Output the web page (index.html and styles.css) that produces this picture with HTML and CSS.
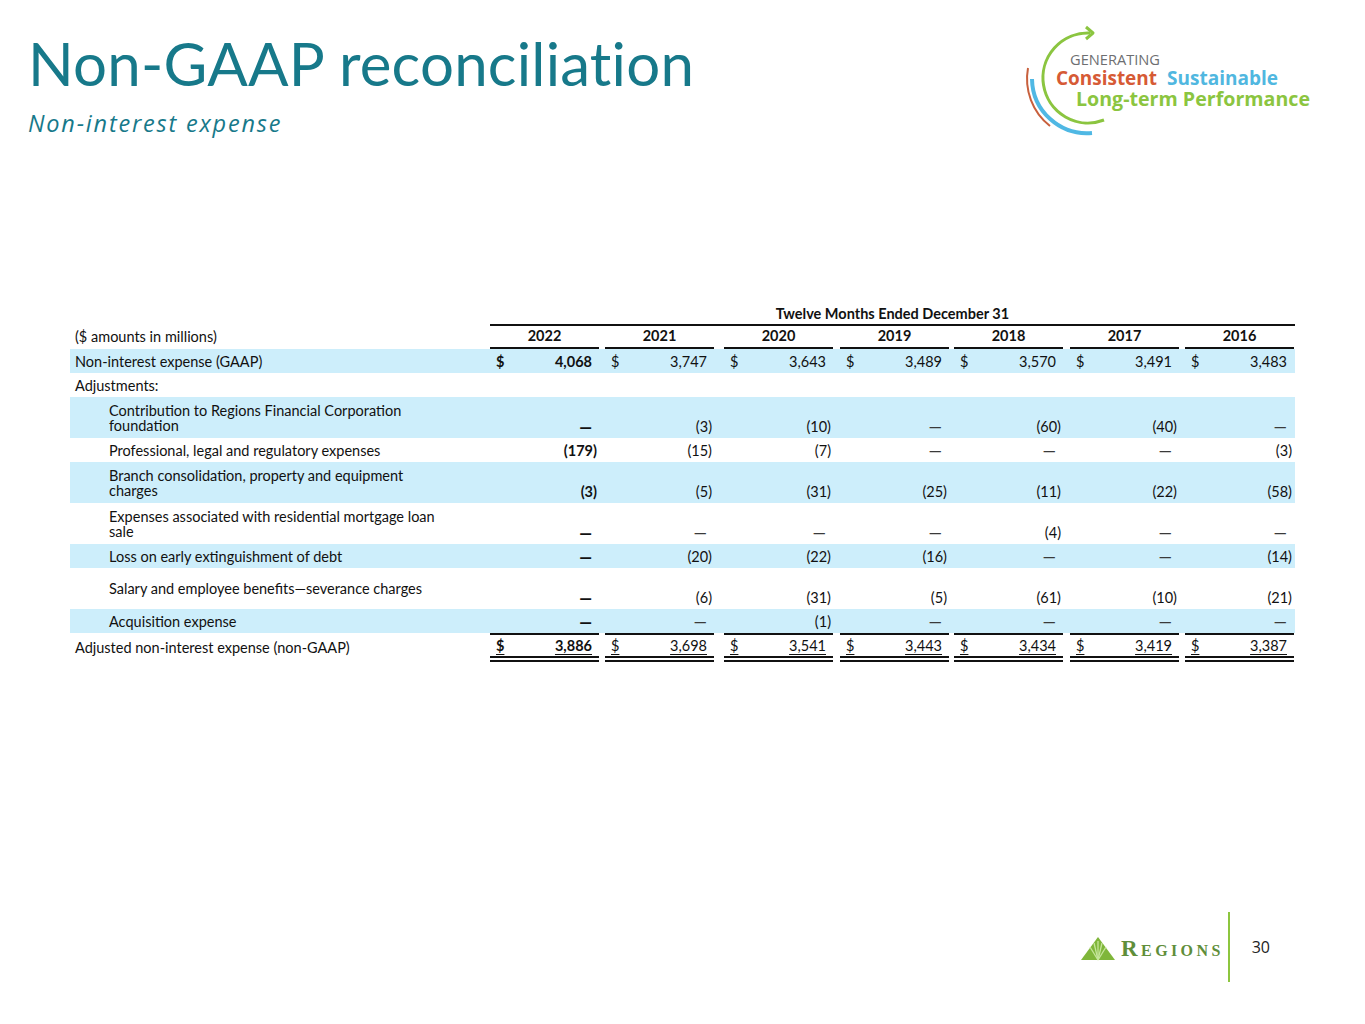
FILE: index.html
```html
<!DOCTYPE html>
<html lang="en">
<head>
<meta charset="utf-8">
<title>Non-GAAP reconciliation</title>
<link rel="stylesheet" href="styles.css">
</head>
<body>
<div class="page">
  <header class="top">
    <div class="titles">
      <h1 class="title">Non-GAAP reconciliation</h1>
      <h2 class="subtitle">Non-interest expense</h2>
    </div>
    <svg class="gen-logo" width="300" height="115" viewBox="0 0 300 115" aria-label="Generating Consistent Sustainable Long-term Performance">
      <path d="M 10 46 A 60 60 0 0 0 32 104" fill="none" stroke="#c8603d" stroke-width="2"/>
      <path d="M 14 57 A 55 55 0 0 0 74 111" fill="none" stroke="#4fb8e4" stroke-width="4"/>
      <path d="M 72 11 A 45 45 0 1 0 86 98" fill="none" stroke="#8bc540" stroke-width="3"/>
      <path d="M 68 5 L 75 11 L 68 17" fill="none" stroke="#8bc540" stroke-width="3" stroke-linejoin="round"/>
      <text class="g-gen" x="52" y="43" textLength="90" lengthAdjust="spacingAndGlyphs">GENERATING</text>
      <text class="g-con" x="38" y="63" textLength="101" lengthAdjust="spacingAndGlyphs">Consistent</text>
      <text class="g-sus" x="149" y="63" textLength="111" lengthAdjust="spacingAndGlyphs">Sustainable</text>
      <text class="g-long" x="58" y="84" textLength="234" lengthAdjust="spacingAndGlyphs">Long-term Performance</text>
    </svg>
  </header>

  <section class="tbl">
    <div class="row hdr1">
      <div class="lbl"></div>
      <div class="span">Twelve Months Ended December 31</div>
    </div>
    <div class="row hdr2">
      <div class="lbl l0">($ amounts in millions)</div>
      <div class="yc">2022</div>
      <div class="yc">2021</div>
      <div class="yc">2020</div>
      <div class="yc">2019</div>
      <div class="yc">2018</div>
      <div class="yc">2017</div>
      <div class="yc">2016</div>
    </div>

    <div class="row sh">
      <div class="lbl l0">Non-interest expense (GAAP)</div>
      <div class="v b"><span>$</span><span class="n">4,068</span></div>
      <div class="v"><span>$</span><span class="n">3,747</span></div>
      <div class="v"><span>$</span><span class="n">3,643</span></div>
      <div class="v"><span>$</span><span class="n">3,489</span></div>
      <div class="v"><span>$</span><span class="n">3,570</span></div>
      <div class="v"><span>$</span><span class="n">3,491</span></div>
      <div class="v"><span>$</span><span class="n">3,483</span></div>
    </div>

    <div class="row">
      <div class="lbl l0">Adjustments:</div>
    </div>

    <div class="row sh tall">
      <div class="lbl ind">Contribution to Regions Financial Corporation<br>foundation</div>
      <div class="v b"><span class="n dash">—</span></div>
      <div class="v"><span class="n neg">(3)</span></div>
      <div class="v"><span class="n neg">(10)</span></div>
      <div class="v"><span class="n dash">—</span></div>
      <div class="v"><span class="n neg">(60)</span></div>
      <div class="v"><span class="n neg">(40)</span></div>
      <div class="v"><span class="n dash">—</span></div>
    </div>

    <div class="row">
      <div class="lbl ind">Professional, legal and regulatory expenses</div>
      <div class="v b"><span class="n neg">(179)</span></div>
      <div class="v"><span class="n neg">(15)</span></div>
      <div class="v"><span class="n neg">(7)</span></div>
      <div class="v"><span class="n dash">—</span></div>
      <div class="v"><span class="n dash">—</span></div>
      <div class="v"><span class="n dash">—</span></div>
      <div class="v"><span class="n neg">(3)</span></div>
    </div>

    <div class="row sh tall">
      <div class="lbl ind">Branch consolidation, property and equipment<br>charges</div>
      <div class="v b"><span class="n neg">(3)</span></div>
      <div class="v"><span class="n neg">(5)</span></div>
      <div class="v"><span class="n neg">(31)</span></div>
      <div class="v"><span class="n neg">(25)</span></div>
      <div class="v"><span class="n neg">(11)</span></div>
      <div class="v"><span class="n neg">(22)</span></div>
      <div class="v"><span class="n neg">(58)</span></div>
    </div>

    <div class="row tall">
      <div class="lbl ind">Expenses associated with residential mortgage loan<br>sale</div>
      <div class="v b"><span class="n dash">—</span></div>
      <div class="v"><span class="n dash">—</span></div>
      <div class="v"><span class="n dash">—</span></div>
      <div class="v"><span class="n dash">—</span></div>
      <div class="v"><span class="n neg">(4)</span></div>
      <div class="v"><span class="n dash">—</span></div>
      <div class="v"><span class="n dash">—</span></div>
    </div>

    <div class="row sh">
      <div class="lbl ind">Loss on early extinguishment of debt</div>
      <div class="v b"><span class="n dash">—</span></div>
      <div class="v"><span class="n neg">(20)</span></div>
      <div class="v"><span class="n neg">(22)</span></div>
      <div class="v"><span class="n neg">(16)</span></div>
      <div class="v"><span class="n dash">—</span></div>
      <div class="v"><span class="n dash">—</span></div>
      <div class="v"><span class="n neg">(14)</span></div>
    </div>

    <div class="row tall">
      <div class="lbl ind">Salary and employee benefits—severance charges</div>
      <div class="v b"><span class="n dash">—</span></div>
      <div class="v"><span class="n neg">(6)</span></div>
      <div class="v"><span class="n neg">(31)</span></div>
      <div class="v"><span class="n neg">(5)</span></div>
      <div class="v"><span class="n neg">(61)</span></div>
      <div class="v"><span class="n neg">(10)</span></div>
      <div class="v"><span class="n neg">(21)</span></div>
    </div>

    <div class="row sh">
      <div class="lbl ind">Acquisition expense</div>
      <div class="v b"><span class="n dash">—</span></div>
      <div class="v"><span class="n dash">—</span></div>
      <div class="v"><span class="n neg">(1)</span></div>
      <div class="v"><span class="n dash">—</span></div>
      <div class="v"><span class="n dash">—</span></div>
      <div class="v"><span class="n dash">—</span></div>
      <div class="v"><span class="n dash">—</span></div>
    </div>

    <div class="row total">
      <div class="lbl l0">Adjusted non-interest expense (non-GAAP)</div>
      <div class="v b"><span class="u">$</span><span class="n u">3,886</span></div>
      <div class="v"><span class="u">$</span><span class="n u">3,698</span></div>
      <div class="v"><span class="u">$</span><span class="n u">3,541</span></div>
      <div class="v"><span class="u">$</span><span class="n u">3,443</span></div>
      <div class="v"><span class="u">$</span><span class="n u">3,434</span></div>
      <div class="v"><span class="u">$</span><span class="n u">3,419</span></div>
      <div class="v"><span class="u">$</span><span class="n u">3,387</span></div>
    </div>
  </section>

  <footer class="foot">
    <svg class="reg-icon" width="34" height="24" viewBox="0 0 34 24" aria-hidden="true">
      <polygon points="0,23 17,0 34,23" fill="#7fb63a"/>
      <g stroke="#c5e59a" stroke-width="1.3">
        <line x1="17" y1="23" x2="9" y2="10"/>
        <line x1="17" y1="23" x2="13" y2="6"/>
        <line x1="17" y1="23" x2="17" y2="4"/>
        <line x1="17" y1="23" x2="21" y2="6"/>
        <line x1="17" y1="23" x2="25" y2="10"/>
      </g>
    </svg>
    <span class="reg-name">Regions</span>
    <span class="vline"></span>
    <span class="pnum">30</span>
  </footer>
</div>
</body>
</html>
```

FILE: styles.css
```css
* { box-sizing: border-box; }
html, body { margin: 0; padding: 0; background: #ffffff; }
.page {
  width: 1365px;
  height: 1024px;
  display: flex;
  flex-direction: column;
  font-family: "Lato", "Open Sans", sans-serif;
  color: #111111;
  overflow: hidden;
}
.top {
  height: 304px;
  flex: none;
  display: flex;
  justify-content: space-between;
  align-items: flex-start;
  padding: 22px 47px 0 28px;
}
.titles { margin-top: 11px; }
.title {
  margin: 0;
  font-family: "Lato", sans-serif;
  font-weight: 400;
  font-size: 60px;
  line-height: 60px;
  color: #17798a;
  letter-spacing: 0.2px;
}
.subtitle {
  margin: 18px 0 0 0;
  font-family: "Open Sans", sans-serif;
  font-style: italic;
  font-weight: 400;
  font-size: 23.5px;
  line-height: 24px;
  letter-spacing: 1.8px;
  color: #17798a;
}
.gen-logo { display: block; }
.gen-logo text { font-family: "Open Sans", "Lato", sans-serif; }
.g-gen { font-size: 15px; fill: #6d6e71; }
.g-con { font-size: 20px; font-weight: 700; fill: #d65a35; }
.g-sus { font-size: 20px; font-weight: 700; fill: #50b7e0; }
.g-long { font-size: 20px; font-weight: 700; fill: #8bc540; }

/* table */
.tbl {
  flex: none;
  margin-left: 70px;
  width: 1225px;
  font-size: 14.5px;
  line-height: 15px;
}
.row {
  display: grid;
  grid-template-columns: 420px 115px 119px 116px 114px 116px 115px 110px;
  height: 24px;
  align-items: center;
}
.row.tall { height: 41px; }
.row.sh { background: #cdeefb; }
.lbl { padding-left: 5px; white-space: nowrap; }
.lbl.ind { padding-left: 39px; }

.hdr1 { height: 22px; align-items: end; }
.hdr1 .span {
  grid-column: 2 / 9;
  text-align: center;
  font-weight: 700;
  border-bottom: 2px solid #111;
  padding-bottom: 3px;
}
.hdr2 { height: 23px; align-items: end; }
.hdr2 .lbl { padding-bottom: 5px; }
.yc {
  width: 109px;
  text-align: center;
  font-weight: 700;
  border-bottom: 2px solid #111;
  padding-bottom: 4px;
}

.v {
  width: 109px;
  display: flex;
  justify-content: space-between;
  padding: 0 7px 0 6px;
}
.v .n { margin-left: auto; }
.v .neg { margin-right: -5px; }
.v.b { font-weight: 700; }
.row.tall .v { align-self: end; padding-bottom: 4px; }
.dash { font-size: 17px; line-height: 15px; color: #3a3a3a; font-weight: 400; }
.v.b .dash { color: #111; font-size: 16px; font-weight: 900; }

.row.total { height: 29px; align-items: stretch; }
.row.total .lbl { align-self: center; }
.row.total .v {
  border-top: 2px solid #111;
  border-bottom: 6px double #111;
  align-items: center;
}
.u { text-decoration: underline; text-underline-offset: 3px; }

/* footer */
.foot {
  flex: none;
  margin-top: auto;
  margin-bottom: 42px;
  height: 70px;
  display: flex;
  align-items: center;
  justify-content: flex-end;
  padding-right: 95px;
}
.reg-icon { display: block; margin-right: 6px; margin-top: 4px; }
.reg-name {
  font-family: "Liberation Serif", serif;
  font-variant: small-caps;
  font-weight: 700;
  font-size: 23px;
  letter-spacing: 3.4px;
  color: #5f8e3a;
  margin-top: 4px;
}
.vline {
  width: 2px;
  height: 70px;
  background: #8dc63f;
  margin: 0 22px 0 4px;
}
.pnum {
  font-family: "Open Sans", sans-serif;
  font-size: 16px;
  color: #222;
}
```
